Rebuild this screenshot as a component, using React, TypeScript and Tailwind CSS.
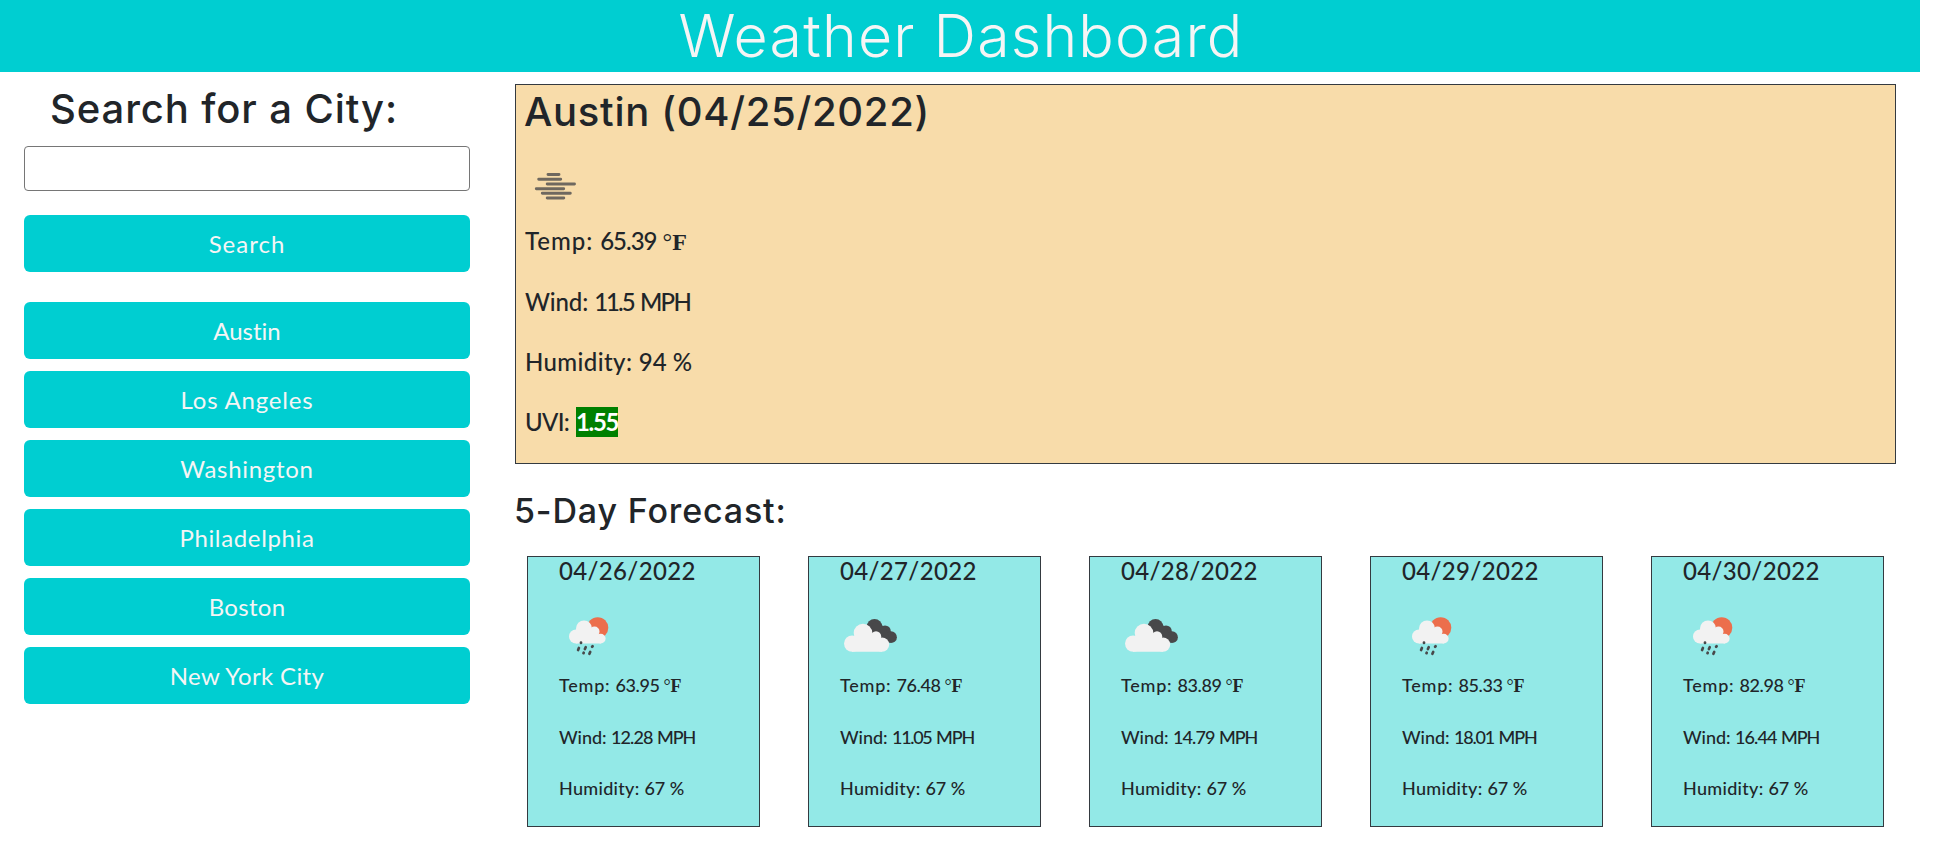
type Day = { date: string; icon: "rain" | "clouds"; temp: string; wind: string; windTracking: string };

const cities = [
  { name: "Austin", tracking: "tracking-[0px]" },
  { name: "Los Angeles", tracking: "tracking-[0.8px]" },
  { name: "Washington", tracking: "tracking-[0.7px]" },
  { name: "Philadelphia", tracking: "tracking-[0.65px]" },
  { name: "Boston", tracking: "tracking-[0.3px]" },
  { name: "New York City", tracking: "tracking-[0.35px]" },
];

const days: Day[] = [
  { date: "04/26/2022", icon: "rain", temp: "63.95", wind: "12.28", windTracking: "tracking-[-0.9px]" },
  { date: "04/27/2022", icon: "clouds", temp: "76.48", wind: "11.05", windTracking: "tracking-[-1.3px]" },
  { date: "04/28/2022", icon: "clouds", temp: "83.89", wind: "14.79", windTracking: "tracking-[-0.9px]" },
  { date: "04/29/2022", icon: "rain", temp: "85.33", wind: "18.01", windTracking: "tracking-[-1.2px]" },
  { date: "04/30/2022", icon: "rain", temp: "82.98", wind: "16.44", windTracking: "tracking-[-0.9px]" },
];

function FogIcon() {
  return (
    <svg className="block size-[60px]" viewBox="0 0 60 60" fill="none" stroke="#48484a" strokeOpacity="0.78" strokeWidth="2.9" strokeLinecap="round">
      <path d="M23 17.5h11M13.7 22.3h22M22.2 27h27.3M11.3 31.7h27.4M17.3 36.3h28M22.2 41h16.6" />
    </svg>
  );
}

function RainIcon() {
  return (
    <svg className="block size-[60px]" viewBox="0 0 60 60">
      <circle cx="38.7" cy="22.8" r="10.6" fill="#ec6e4c" />
      <g fill="#f2f2f2">
        <circle cx="17" cy="31.5" r="7" />
        <circle cx="25" cy="23.5" r="8" />
        <circle cx="35.5" cy="26.5" r="5" />
        <circle cx="41.7" cy="33.6" r="4.9" />
        <path d="M17 24h18l7 8v6.5H17z" />
      </g>
      <g stroke="#48484a" strokeWidth="2.7" strokeLinecap="round">
        <path d="M22 37.6v.4M19.9 43l-.8 2M26.7 42.2l-.8 1.8M33.6 41.2l-.5.5M24.7 47.7l-.2.5M31.2 47l-.8 1.8" />
      </g>
    </svg>
  );
}

function CloudsIcon() {
  return (
    <svg className="block size-[60px]" viewBox="0 0 60 60">
      <g fill="#48484a">
        <circle cx="34.5" cy="21.8" r="7.8" />
        <circle cx="45" cy="26.2" r="5.8" />
        <circle cx="51" cy="32.2" r="5.9" />
        <path d="M34 16l11 6 6 15-7 1-14-12z" />
      </g>
      <g fill="#f2f2f2">
        <circle cx="12.2" cy="38.6" r="8.2" />
        <circle cx="23" cy="28" r="9.3" />
        <circle cx="36" cy="31.4" r="5.2" />
        <circle cx="42" cy="39.6" r="7.2" />
        <path d="M12 31h20l6-3 3 5 1 13.8H12z" />
      </g>
    </svg>
  );
}

function Fahrenheit({ className }: { className: string }) {
  return (
    <span className={`font-['Liberation_Serif',serif] tracking-normal ${className}`}>
      °<b className="font-bold">F</b>
    </span>
  );
}

function ForecastCard({ day }: { day: Day }) {
  return (
    <article className="h-[271px] w-[233px] border border-[#343a40] bg-[#93e9e7] pl-[31px] text-[18px] leading-[27px] font-medium">
      <h3 className="h-[48px] text-[24px] leading-[28px] tracking-[0.35px]">{day.date}</h3>
      <div className="h-[67px]">{day.icon === "rain" ? <RainIcon /> : <CloudsIcon />}</div>
      <div className="flex flex-col gap-6">
        <p>
          <span className="tracking-[0.75px]">Temp: </span>
          <span className="tracking-[-0.45px]">{day.temp}</span>
          <Fahrenheit className="ml-[4px]" />
        </p>
        <p>
          <span className="tracking-[-0.05px]">Wind: </span>
          <span className={day.windTracking}>{day.wind}</span>
          <span className="ml-px tracking-[-1.1px]"> MPH</span>
        </p>
        <p>
          <span className="tracking-[0.3px]">Humidity: </span>
          <span>67 %</span>
        </p>
      </div>
    </article>
  );
}

export default function App() {
  return (
    <div className="h-[865px] w-[1920px] bg-white font-['Lato',sans-serif] text-[#212529] [font-variant-ligatures:none]">
      <header className="h-[72px] bg-[#00ced1] text-center">
        <h1 className="pl-[2px] font-['Inter',sans-serif] text-[59px] leading-[72px] font-[350] tracking-[1.2px] text-[#f5f5f5]">Weather Dashboard</h1>
      </header>
      <div className="flex">
        <aside className="ml-6 w-[446px]">
          <h2 className="mt-[13px] pl-[26px] font-['Inter',sans-serif] text-[40px] leading-[48px] font-medium tracking-[0.9px]">Search for a City:</h2>
          <input aria-label="City" className="mt-[13px] block h-[45px] w-full rounded-[4px] border border-[#767676] bg-white px-2 text-2xl outline-none" />
          <button className="mt-6 block h-[57px] w-full rounded-[6px] bg-[#00ced1] text-[24px] tracking-[1px] text-[#f5f5f5]">Search</button>
          <nav className="mt-[30px] flex flex-col gap-3">
            {cities.map((c) => (
              <button key={c.name} className={`h-[57px] w-full rounded-[6px] bg-[#00ced1] text-[24px] text-[#f5f5f5] ${c.tracking}`}>
                {c.name}
              </button>
            ))}
          </nav>
        </aside>
        <main className="ml-[45px] w-[1381px]">
          <section className="mt-3 h-[380px] border border-[#343a40] bg-[#f8dcaa] pl-[9px] text-[24px] leading-[36px] font-medium">
            <h2 className="mt-[3px] -ml-px font-['Inter',sans-serif] text-[40px] leading-[48px] font-medium tracking-[0.7px]">Austin (04/25/2022)</h2>
            <div className="mt-[21px] h-[66px]">
              <FogIcon />
            </div>
            <div className="flex flex-col gap-6">
              <p>
                <span className="tracking-[0.95px]">Temp: </span>
                <span className="tracking-[-1px]">65.39</span>
                <Fahrenheit className="ml-[6px]" />
              </p>
              <p>
                <span className="tracking-[-0.1px]">Wind: </span>
                <span className="tracking-[-2px]">11.5</span>
                <span className="ml-[2px] tracking-[-1.7px]"> MPH</span>
              </p>
              <p>
                <span className="tracking-[0.4px]">Humidity: </span>
                <span>94 %</span>
              </p>
              <p className="flex items-center">
                <span className="w-[51px] tracking-[-0.7px]">UVI:</span>
                <span className="h-[30px] w-[42px] bg-[green] leading-[30px] font-bold tracking-[-1.37px] text-white">1.55</span>
              </p>
            </div>
          </section>
          <h2 className="mt-[26px] -ml-px font-['Inter',sans-serif] text-[34px] leading-[41px] font-medium tracking-[0.85px]">5-Day Forecast:</h2>
          <section className="mt-[25px] ml-3 flex gap-12">
            {days.map((d) => (
              <ForecastCard key={d.date} day={d} />
            ))}
          </section>
        </main>
      </div>
    </div>
  );
}
